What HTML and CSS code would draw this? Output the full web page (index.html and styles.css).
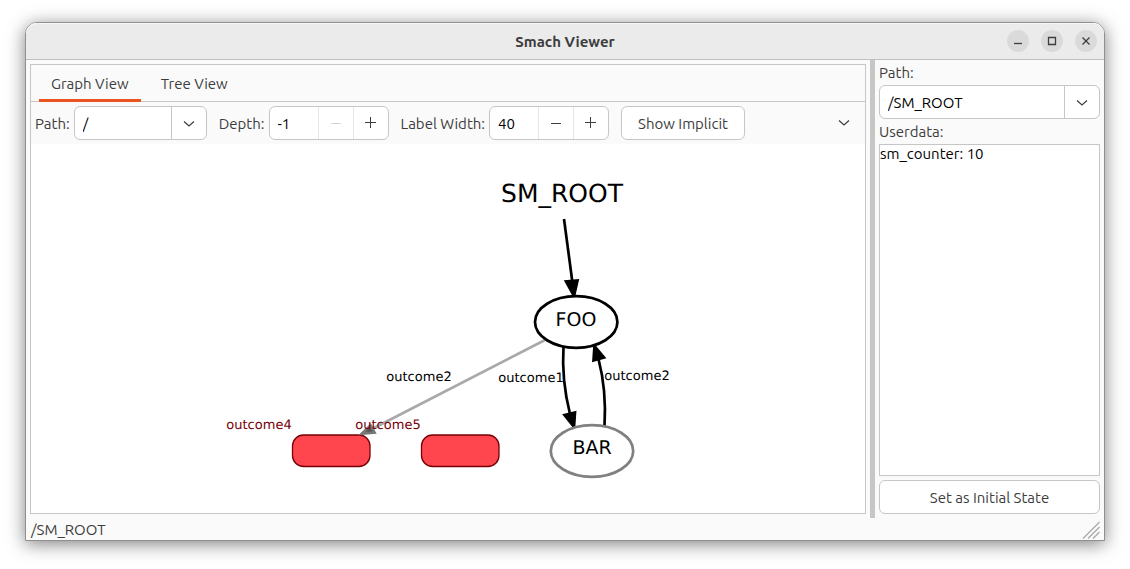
FILE: index.html
```html
<!DOCTYPE html>
<html lang="en">
<head>
<meta charset="utf-8">
<title>Smach Viewer</title>
<link rel="stylesheet" href="styles.css">
</head>
<body>
<div class="window">
  <header class="titlebar">
    <h1 class="title">Smach Viewer</h1>
    <div class="window-controls">
      <button class="round" type="button" aria-label="Minimize"><svg width="22" height="22"><path d="M7 13.500h8" /></svg></button>
      <button class="round" type="button" aria-label="Maximize"><svg width="22" height="22"><path d="M7.500 7.500h7v7h-7z" /></svg></button>
      <button class="round" type="button" aria-label="Close"><svg width="22" height="22"><path d="M7.500 7.500l7 7M14.500 7.500l-7 7" /></svg></button>
    </div>
  </header>

  <div class="content">
    <main class="notebook">
      <nav class="tabs" role="tablist">
        <button class="tab active" type="button" role="tab" aria-selected="true">Graph View</button>
        <button class="tab" type="button" role="tab" aria-selected="false">Tree View</button>
      </nav>

      <div class="toolbar">
        <div class="field">
          <label for="path">Path:</label>
          <div class="combo combo-small">
            <select id="path"><option>/</option></select>
            <svg class="chevron" width="12" height="8"><path d="M1 1.500l5 4.500 5-4.500" /></svg>
          </div>
        </div>
        <div class="field">
          <label for="depth">Depth:</label>
          <div class="spin">
            <input id="depth" type="text" inputmode="numeric" value="-1">
            <button type="button" aria-label="Decrease depth" disabled><svg width="12" height="12"><path d="M1 6.500h10" /></svg></button>
            <button type="button" aria-label="Increase depth"><svg width="12" height="12"><path d="M0 5.500h11M5.500 0v11" /></svg></button>
          </div>
        </div>
        <div class="field">
          <label for="label-width">Label Width:</label>
          <div class="spin">
            <input id="label-width" type="text" inputmode="numeric" value="40">
            <button type="button" aria-label="Decrease label width"><svg width="12" height="12"><path d="M1 6.500h10" /></svg></button>
            <button type="button" aria-label="Increase label width"><svg width="12" height="12"><path d="M0 5.500h11M5.500 0v11" /></svg></button>
          </div>
        </div>
        <button class="button" type="button">Show Implicit</button>
        <button class="more" type="button" aria-label="More tools"><svg class="glyph" width="12" height="8"><path d="M1 1.500l5 4.500 5-4.500" /></svg></button>
      </div>

      <div class="graph">
        <svg class="canvas" viewBox="31 144 834 369" role="img" aria-label="State machine graph">
          <g class="exit">
            <rect x="292.500" y="435" width="77.500" height="31.500" rx="11" />
            <rect x="421.500" y="435" width="77.500" height="31.500" rx="11" />
          </g>
          <path class="edge faded" d="M545 340L372 429" />
          <path class="arrow faded-arrow" d="M362 433.500L370.500 425.500L374.500 432.500Z" />
          <path class="edge" d="M564 219L572.500 283" />
          <path class="arrow" d="M574 296L566 281.500L577.500 280.500Z" />
          <path class="edge" d="M563.500 347C562 370 564.500 392 570 414" />
          <path class="arrow" d="M574 427L564.500 415L575 412.500Z" />
          <path class="edge" d="M604.500 426C606 402 604 380 598.500 359" />
          <path class="arrow" d="M594.500 346L604 357.500L593.500 360.500Z" />
          <ellipse class="node current" cx="576.200" cy="322" rx="41.200" ry="25.800" />
          <ellipse class="node" cx="592" cy="451" rx="41.200" ry="25.800" />
          <g class="name">
            <text class="root-name" x="562" y="202">SM_ROOT</text>
            <text x="576" y="326">FOO</text>
            <text x="592" y="454">BAR</text>
          </g>
          <g class="outcome">
            <text x="419" y="381">outcome2</text>
            <text x="531" y="382">outcome1</text>
            <text x="637" y="380">outcome2</text>
            <text class="exit-name" x="259" y="429">outcome4</text>
            <text class="exit-name" x="388" y="429">outcome5</text>
          </g>
        </svg>
      </div>
    </main>

    <div class="splitter"></div>

    <aside class="sidebar">
      <label for="state-path">Path:</label>
      <div class="combo">
        <select id="state-path"><option>/SM_ROOT</option></select>
        <svg class="chevron" width="12" height="8"><path d="M1 1.500l5 4.500 5-4.500" /></svg>
      </div>
      <label for="userdata">Userdata:</label>
      <textarea id="userdata" class="userdata">sm_counter: 10</textarea>
      <button class="button" type="button">Set as Initial State</button>
    </aside>
  </div>

  <footer class="status">
    <span>/SM_ROOT</span>
    <svg class="grip" width="18" height="18"><path d="M1 17.500L17.500 1M6 17.500L17.500 6M11 17.500L17.500 11" /></svg>
  </footer>
</div>
</body>
</html>
```
FILE: styles.css
```css
* {
  box-sizing: border-box;
}

body {
  display: flex;
  height: 100vh;
  margin: 0;
  padding: 22px 25px 28px;
  background: #fff;
  color: #3d3d3d;
  font: 15px/19px Ubuntu, "Noto Sans", sans-serif;
}

button,
input,
select,
textarea {
  margin: 0;
  color: inherit;
  font: inherit;
}

button {
  padding: 0;
  border: 0;
  background: none;
}

svg {
  display: block;
  fill: none;
}

.window {
  display: flex;
  flex: 1;
  flex-direction: column;
  min-width: 0;
  border: 1px solid #8f8f8f;
  border-radius: 12px 12px 0 0;
  background: #fafafa;
  box-shadow: 0 3px 18px rgba(0, 0, 0, 0.5);
}

.titlebar {
  display: grid;
  grid-template-columns: 1fr auto 1fr;
  align-items: center;
  height: 37px;
  padding: 0 7px;
  border-bottom: 1px solid #bfbfbf;
  border-radius: 11px 11px 0 0;
  background: #ebebeb;
  box-shadow: inset 0 1px #f9f9f9;
}

.title {
  grid-column: 2;
  margin: 0;
  font-size: 15px;
  font-weight: 700;
}

.window-controls {
  display: flex;
  justify-content: flex-end;
  gap: 12px;
}

.round {
  width: 22px;
  height: 22px;
  border-radius: 50%;
  background: #dadada;
}

.round svg {
  stroke: #3d3d3d;
  stroke-width: 1.300;
}

.content {
  display: flex;
  flex: 1;
  min-height: 0;
}

.notebook {
  display: flex;
  flex: 1;
  flex-direction: column;
  min-width: 0;
  margin: 4px;
  border: 1px solid #c6c6c6;
}

.tabs {
  display: flex;
  height: 37px;
  padding: 0 8px;
  border-bottom: 1px solid #c6c6c6;
}

.tab {
  height: 37px;
  padding: 2px 12px 0;
  border-bottom: 3px solid transparent;
}

.tab + .tab {
  margin-left: 8px;
}

.tab.active {
  border-color: #e95420;
}

.toolbar {
  display: flex;
  align-items: center;
  gap: 12px;
  height: 42px;
  padding: 0 11px 0 4px;
}

.field {
  display: flex;
  align-items: center;
  gap: 4px;
  white-space: nowrap;
}

.field label {
  padding-top: 1px;
}

.combo {
  position: relative;
}

.combo select {
  display: block;
  width: 100%;
  height: 34px;
  padding: 0 44px 0 8px;
  border: 1px solid #c6c6c6;
  border-radius: 6px;
  background: linear-gradient(#c6c6c6, #c6c6c6) right 34px top / 1px 100% no-repeat #fff;
  color: #000;
  appearance: none;
}

.combo-small {
  width: 133px;
}

.chevron {
  position: absolute;
  top: 14px;
  right: 12px;
  pointer-events: none;
}

.chevron,
.glyph {
  stroke: #3d3d3d;
  stroke-width: 1.200;
}

.spin {
  display: flex;
  width: 120px;
  height: 34px;
  overflow: hidden;
  border: 1px solid #c6c6c6;
  border-radius: 6px;
  background: #fff;
}

.spin input {
  flex: 1;
  min-width: 0;
  padding: 0 8px;
  border: 0;
  background: none;
  color: #000;
}

.spin button {
  display: grid;
  place-items: center;
  width: 35px;
  border-left: 1px solid #e5e5e5;
}

.spin svg {
  stroke: #3d3d3d;
}

.spin button:disabled svg {
  stroke: #d6d6d6;
}

.button {
  height: 34px;
  padding: 0 16px;
  border: 1px solid #c6c6c6;
  border-radius: 6px;
  background: #fff;
  white-space: nowrap;
}

.more {
  margin-left: auto;
  padding: 4px;
}

.graph {
  flex: 1;
  min-height: 0;
  background: #fff;
}

.canvas {
  width: 100%;
  height: 100%;
}

.edge {
  stroke: #000;
  stroke-width: 2.700;
}

.edge.faded {
  stroke: #a9a9a9;
}

.arrow {
  fill: #000;
  stroke: #000;
  stroke-width: 2.700;
}

.faded-arrow {
  fill: #555;
  stroke: #777;
}

.node {
  fill: #fff;
  stroke: #808080;
  stroke-width: 2.700;
}

.node.current {
  stroke: #000;
}

.exit rect {
  fill: #ff464f;
  stroke: #780006;
  stroke-width: 1.300;
}

.name,
.outcome {
  fill: #000;
  font-family: "DejaVu Sans", sans-serif;
  text-anchor: middle;
  text-rendering: geometricPrecision;
}

.name {
  font-size: 19px;
}

.root-name {
  font-size: 25px;
}

.outcome {
  font-size: 13px;
}

.exit-name {
  fill: #780006;
}

.splitter {
  width: 5px;
  background: #c6c6c6;
}

.sidebar {
  display: flex;
  flex-direction: column;
  gap: 3px;
  width: 229px;
  padding: 3px 4px 4px;
}

.userdata {
  flex: 1;
  width: 100%;
  margin-bottom: 1px;
  padding: 0;
  border: 1px solid #c6c6c6;
  background: #fff;
  color: #000;
  line-height: 17px;
  resize: none;
}

.status {
  display: flex;
  align-items: center;
  justify-content: space-between;
  height: 22px;
  padding: 1px 4px 0 5px;
}

.grip {
  stroke: #a9a9a9;
  stroke-width: 1.300;
}
```
